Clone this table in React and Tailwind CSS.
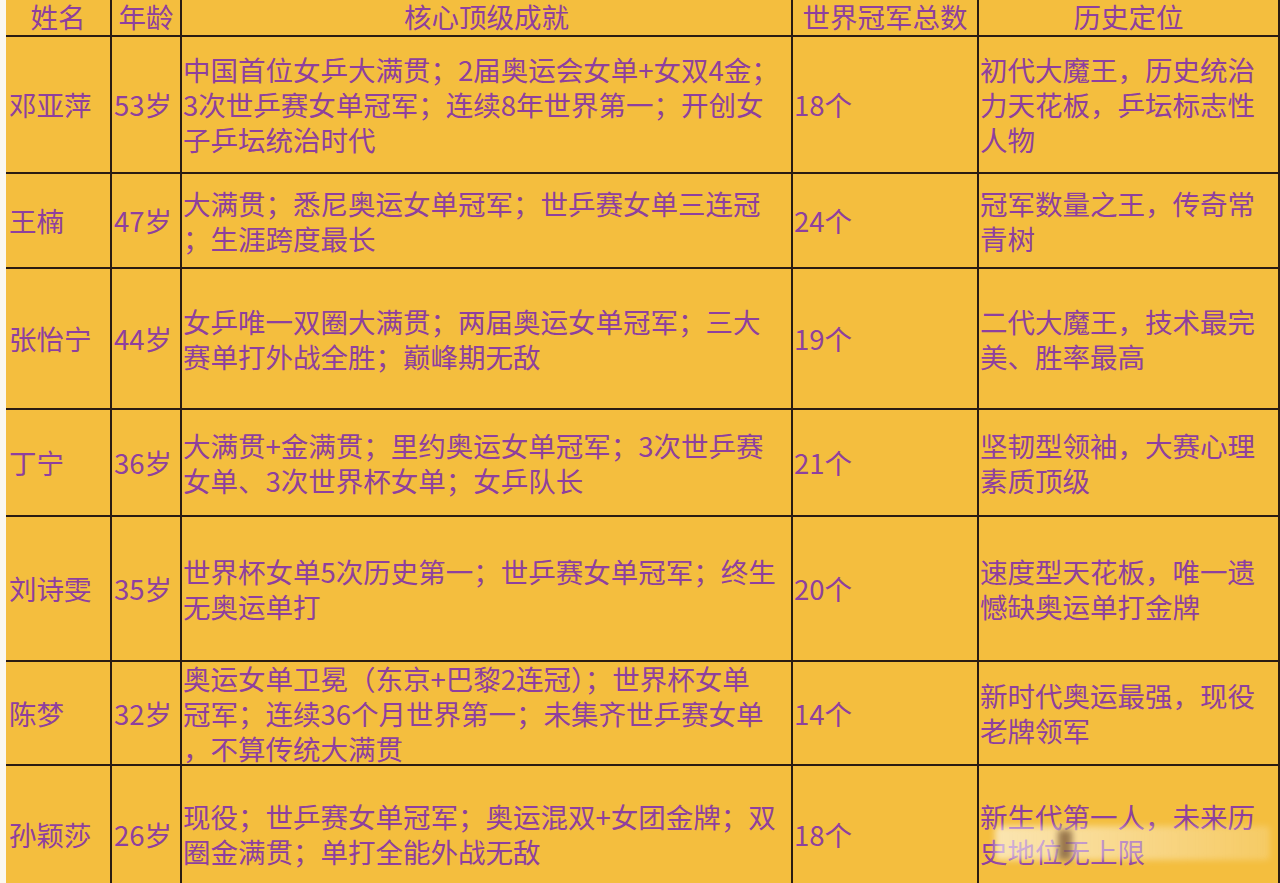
import React from "react";

const rows = [
  {
    h: "h-[137px]",
    name: "邓亚萍",
    age: "53岁",
    ach: ["中国首位女乒大满贯；2届奥运会女单+女双4金；", "3次世乒赛女单冠军；连续8年世界第一；开创女", "子乒坛统治时代"],
    cnt: "18个",
    pos: ["初代大魔王，历史统治", "力天花板，乒坛标志性", "人物"],
  },
  {
    h: "h-[95px]",
    name: "王楠",
    age: "47岁",
    ach: ["大满贯；悉尼奥运女单冠军；世乒赛女单三连冠", "；生涯跨度最长"],
    cnt: "24个",
    pos: ["冠军数量之王，传奇常", "青树"],
  },
  {
    h: "h-[141px]",
    name: "张怡宁",
    age: "44岁",
    ach: ["女乒唯一双圈大满贯；两届奥运女单冠军；三大", "赛单打外战全胜；巅峰期无敌"],
    cnt: "19个",
    pos: ["二代大魔王，技术最完", "美、胜率最高"],
  },
  {
    h: "h-[107px]",
    name: "丁宁",
    age: "36岁",
    ach: ["大满贯+金满贯；里约奥运女单冠军；3次世乒赛", "女单、3次世界杯女单；女乒队长"],
    cnt: "21个",
    pos: ["坚韧型领袖，大赛心理", "素质顶级"],
  },
  {
    h: "h-[145px]",
    name: "刘诗雯",
    age: "35岁",
    ach: ["世界杯女单5次历史第一；世乒赛女单冠军；终生", "无奥运单打"],
    cnt: "20个",
    pos: ["速度型天花板，唯一遗", "憾缺奥运单打金牌"],
  },
  {
    h: "h-[104px]",
    name: "陈梦",
    age: "32岁",
    ach: ["奥运女单卫冕（东京+巴黎2连冠）；世界杯女单", "冠军；连续36个月世界第一；未集齐世乒赛女单", "，不算传统大满贯"],
    cnt: "14个",
    pos: ["新时代奥运最强，现役", "老牌领军"],
  },
  {
    h: "h-[138px]",
    name: "孙颖莎",
    age: "26岁",
    ach: ["现役；世乒赛女单冠军；奥运混双+女团金牌；双", "圈金满贯；单打全能外战无敌"],
    cnt: "18个",
    pos: ["新生代第一人，未来历", "史地位无上限"],
  },
];

const cell = "border-r-2 border-b-2 border-[#2a1c12] bg-[#f4be3e] flex flex-col justify-center";
const head = `${cell} h-[37px] items-center leading-[31px] pb-[3px]`;

function Lines({ lines }) {
  return lines.map((l, i) => (
    <div key={i} className="whitespace-nowrap">
      {l}
    </div>
  ));
}

export default function App() {
  return (
    <div
      className="relative w-[1280px] h-[883px] overflow-hidden bg-[#fbf8ef] flex text-[#8e409e] text-[27.5px] leading-[35px]"
      style={{ fontFamily: '"Noto Sans CJK SC", "Noto Sans", sans-serif' }}
    >
      <div className="w-[6px] shrink-0" />
      <div className="grid grid-cols-[106px_70px_611px_186px_301px] content-start">
        <div className={head}>姓名</div>
        <div className={head}>年龄</div>
        <div className={head}>核心顶级成就</div>
        <div className={head}>世界冠军总数</div>
        <div className={head}>历史定位</div>
        {rows.map((r, i) => (
          <React.Fragment key={i}>
            <div className={`${cell} ${r.h} pl-[3px]`}>{r.name}</div>
            <div className={`${cell} ${r.h} pl-[2px]`}>{r.age}</div>
            <div className={`${cell} ${r.h} pl-[1px]`}>
              <Lines lines={r.ach} />
            </div>
            <div className={`${cell} ${r.h} pl-[1px]`}>{r.cnt}</div>
            <div className={`${cell} ${r.h} pl-[1px]`}>
              <Lines lines={r.pos} />
            </div>
          </React.Fragment>
        ))}
      </div>
      <div className="absolute left-[995px] top-[826px] w-[275px] h-[34px] rounded-sm bg-gradient-to-r from-white/60 via-white/40 to-white/20 blur-[3px]" />
      <div className="absolute left-[1058px] top-[830px] w-[14px] h-[30px] bg-[#5a3418]/60 blur-[3px]" />
    </div>
  );
}
